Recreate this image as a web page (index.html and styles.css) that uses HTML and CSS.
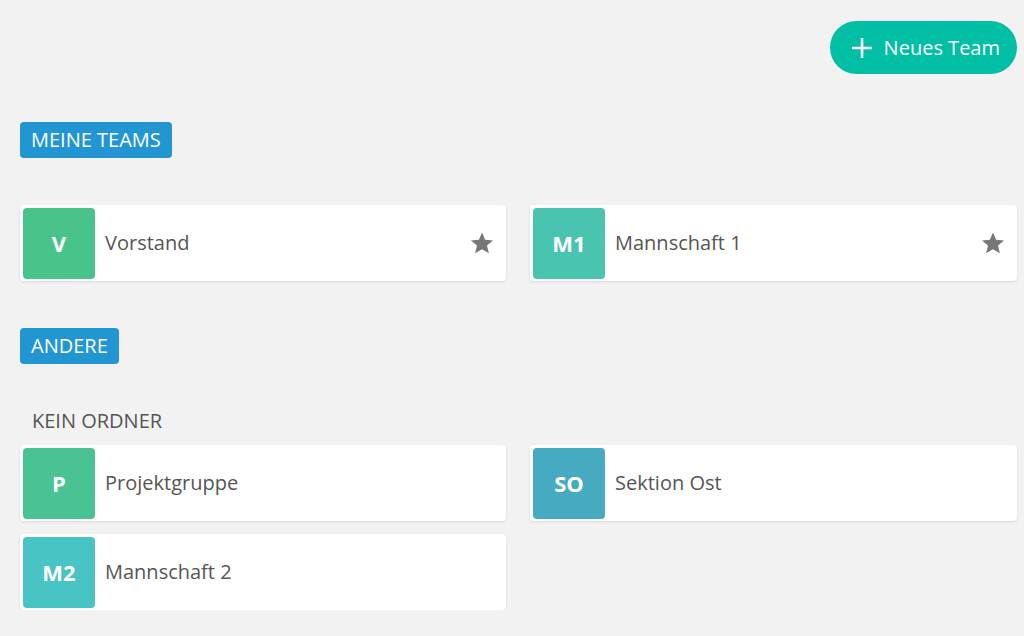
FILE: index.html
```html
<!DOCTYPE html>
<html>
<head>
  <meta charset="utf-8">
  <title>Teams</title>
  <link rel="stylesheet" href="styles.css">
</head>
<body>
  <div class="page">
    <div class="toolbar">
      <button class="btn-new">
        <svg width="22" height="22" viewBox="0 0 22 22"><path d="M11 1v20M1 11h20" stroke="#fff" stroke-width="2.6" fill="none"/></svg>
        <span>Neues Team</span>
      </button>
    </div>

    <div class="section">
      <span class="badge">MEINE TEAMS</span>
    </div>
    <div class="grid">
      <div class="card">
        <div class="avatar av-v">V</div>
        <div class="name">Vorstand</div>
        <svg class="star" width="24" height="24" viewBox="0 0 24 24"><path d="M12 1.5l3.1 7.3 7.9.6-6 5.2 1.9 7.7L12 18.2l-6.9 4.1 1.9-7.7-6-5.2 7.9-.6z" fill="#777"/></svg>
      </div>
      <div class="card">
        <div class="avatar av-m1">M1</div>
        <div class="name">Mannschaft 1</div>
        <svg class="star" width="24" height="24" viewBox="0 0 24 24"><path d="M12 1.5l3.1 7.3 7.9.6-6 5.2 1.9 7.7L12 18.2l-6.9 4.1 1.9-7.7-6-5.2 7.9-.6z" fill="#777"/></svg>
      </div>
    </div>

    <div class="section section-other">
      <span class="badge">ANDERE</span>
    </div>
    <div class="folder">KEIN ORDNER</div>
    <div class="grid">
      <div class="card">
        <div class="avatar av-p">P</div>
        <div class="name">Projektgruppe</div>
      </div>
      <div class="card">
        <div class="avatar av-so">SO</div>
        <div class="name">Sektion Ost</div>
      </div>
      <div class="card">
        <div class="avatar av-m2">M2</div>
        <div class="name">Mannschaft 2</div>
      </div>
    </div>
  </div>
</body>
</html>
```

FILE: styles.css
```css
body {
  margin: 0;
  background: #f2f2f2;
  font-family: "Open Sans", "Noto Sans", sans-serif;
  color: #555;
}

.page {
  padding: 21px 7px 0 20px;
}

.toolbar {
  display: flex;
  justify-content: flex-end;
}

.btn-new {
  display: flex;
  align-items: center;
  gap: 11px;
  height: 53px;
  padding: 0 17px 0 21px;
  border: none;
  border-radius: 27px;
  background: #00bfa5;
  color: #fff;
  font-family: inherit;
  font-size: 20px;
  cursor: pointer;
}

.section {
  margin-top: 48px;
}

.section-other {
  margin-top: 47px;
}

.badge {
  display: inline-block;
  height: 36px;
  line-height: 36px;
  padding: 0 11px;
  border-radius: 4px;
  background: #2196d3;
  color: #fff;
  font-size: 20px;
}

.section + .grid {
  margin-top: 47px;
}

.folder {
  margin: 43px 0 0 12px;
  font-size: 20px;
  line-height: 27px;
}

.folder + .grid {
  margin-top: 11px;
}

.grid {
  display: grid;
  grid-template-columns: 486px 487px;
  column-gap: 24px;
  row-gap: 13px;
}

.card {
  display: flex;
  align-items: center;
  height: 76px;
  padding: 0 12px 0 3px;
  background: #fff;
  border-radius: 4px;
  box-shadow: 0 1px 3px rgba(0, 0, 0, 0.1);
  box-sizing: border-box;
}

.avatar {
  width: 72px;
  height: 71px;
  display: flex;
  align-items: center;
  justify-content: center;
  border-radius: 4px;
  color: #fff;
  font-size: 22px;
  font-weight: 700;
}

.av-v { background: #48c38a; }
.av-m1 { background: #49c4b0; }
.av-p { background: #4ac394; }
.av-so { background: #46abc0; }
.av-m2 { background: #48c4c4; }

.name {
  flex: 1;
  margin-left: 10px;
  margin-bottom: 2px;
  font-size: 20px;
}

.star {
  flex: none;
}
```
